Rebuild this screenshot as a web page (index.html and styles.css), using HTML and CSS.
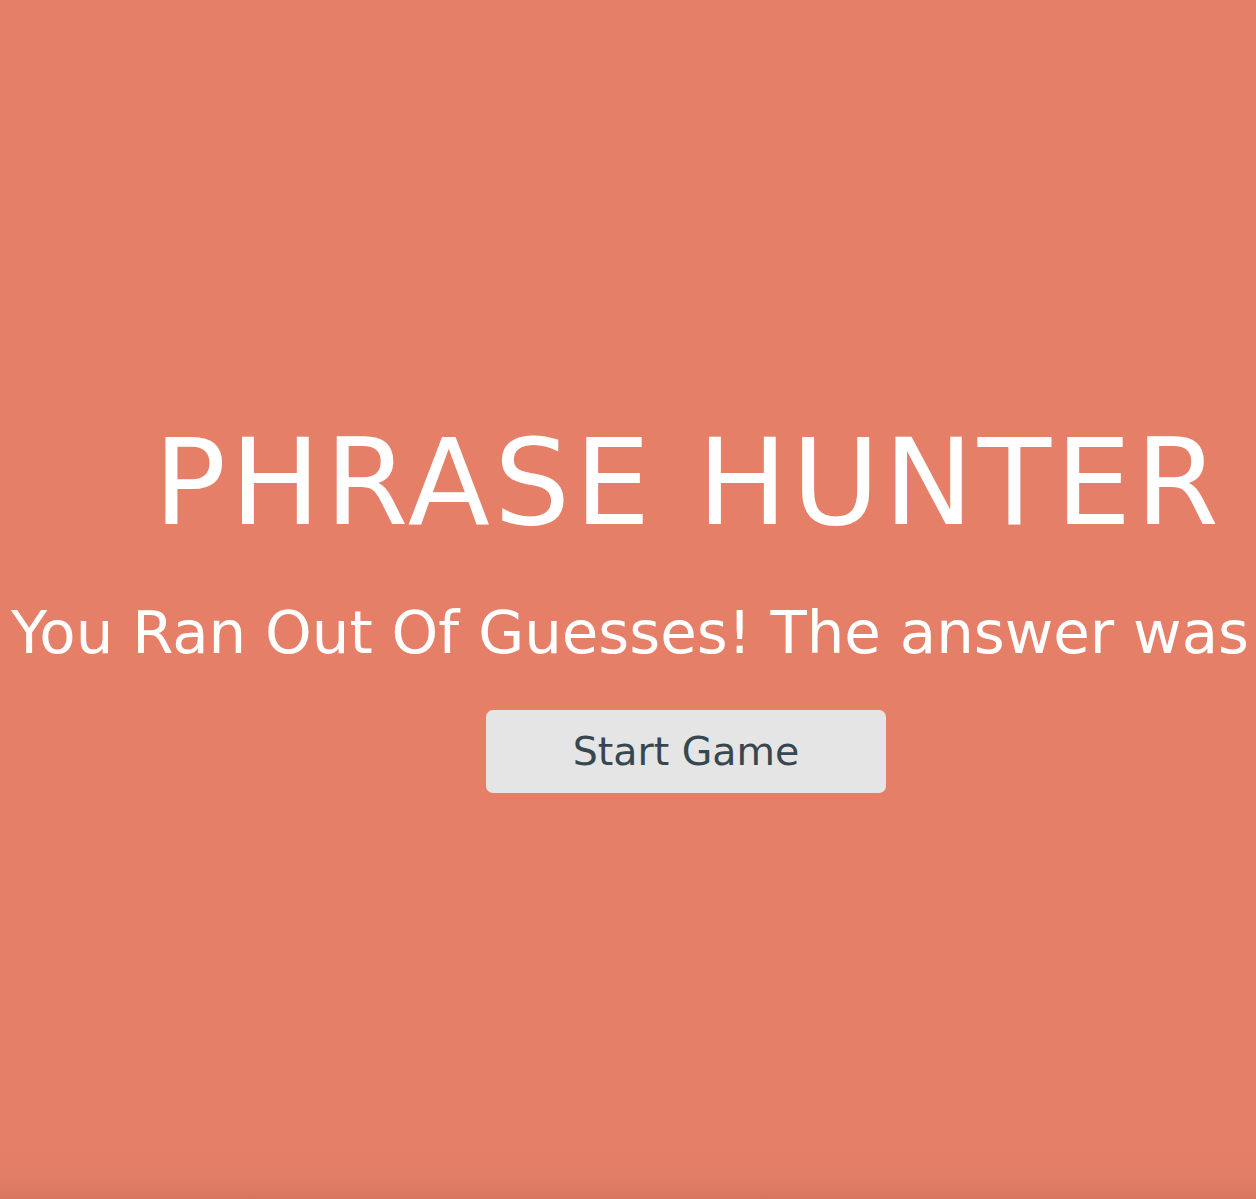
FILE: index.html
```html
<!DOCTYPE html>
<html lang="en">
<head>
<meta charset="utf-8">
<title>Phrase Hunter</title>
<link rel="stylesheet" href="styles.css">
</head>
<body>
<div class="overlay lose">
  <h2 class="title">PHRASE HUNTER</h2>
  <h1 class="game-over-message">You Ran Out Of Guesses! The answer was</h1>
  <button class="btn-reset" type="button">Start Game</button>
</div>
</body>
</html>
```

FILE: styles.css
```css
html, body {
  margin: 0;
  padding: 0;
  height: 100%;
}

body {
  font-family: "DejaVu Sans", "Liberation Sans", sans-serif;
  overflow: hidden;
}

.overlay {
  box-sizing: border-box;
  height: 1199px;
  display: flex;
  flex-direction: column;
  align-items: center;
  padding-top: 423px;
  background: linear-gradient(to bottom, #e57f67 0, #e57f67 1150px, #e07d66 1180px, #d77660 1199px);
  color: #ffffff;
}

.title {
  margin: 0 0 60px 121px;
  font-size: 120px;
  font-weight: 400;
  letter-spacing: 4.3px;
  line-height: 1;
  white-space: nowrap;
}

.game-over-message {
  margin: 0 0 48px 4px;
  font-size: 59.4px;
  font-weight: 400;
  line-height: 1;
  white-space: nowrap;
}

.btn-reset {
  margin-left: 116px;
  width: 400px;
  height: 83px;
  padding: 0;
  border: none;
  border-radius: 7px;
  background: #e5e5e5;
  color: #37474f;
  font-family: "DejaVu Sans", "Liberation Sans", sans-serif;
  font-size: 39.5px;
  line-height: 1;
  display: flex;
  align-items: center;
  justify-content: center;
}
```
